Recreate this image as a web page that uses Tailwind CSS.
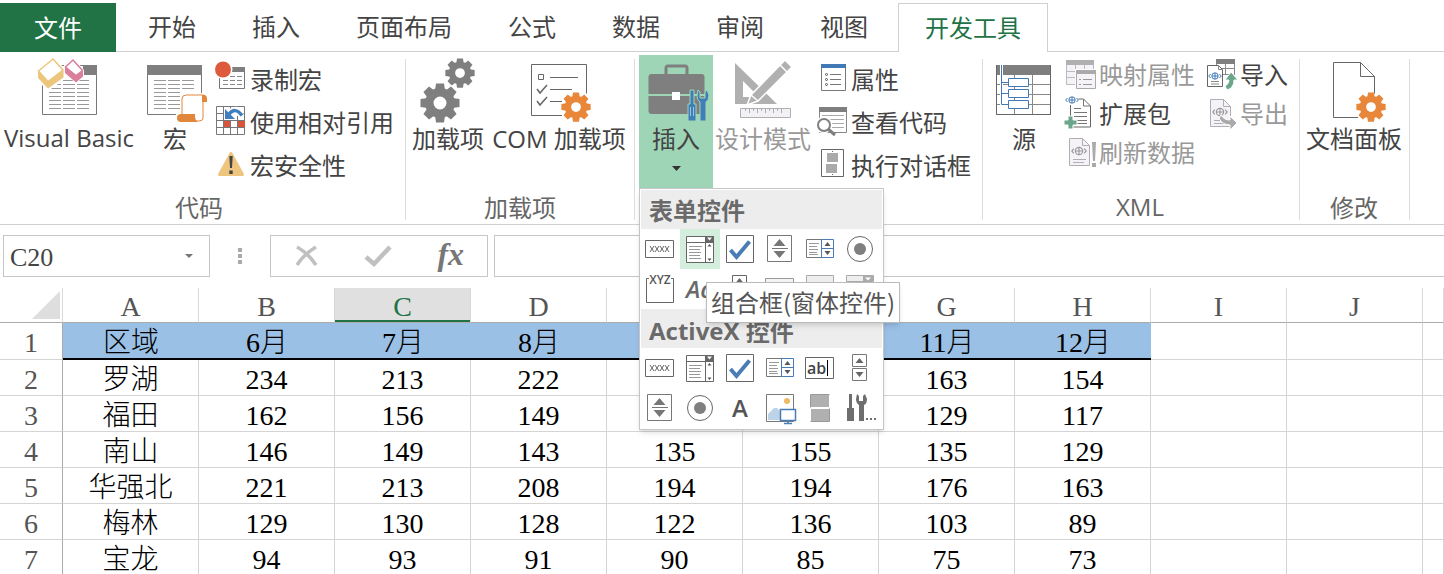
<!DOCTYPE html>
<html lang="zh-CN">
<head>
<meta charset="utf-8">
<title>工作表 - 开发工具</title>
<script src="https://cdn.jsdelivr.net/npm/@tailwindcss/browser@4"></script>
</head>
<body class="bg-white">
<svg class="hidden" aria-hidden="true">
  <defs>
    <symbol id="gear" viewBox="-20 -20 40 40">
      <circle r="10.7" fill="none" stroke="currentColor" stroke-width="8.4"/>
      <g fill="currentColor">
        <path id="tooth" d="M-4-19.5h8l1 7h-10zM-4 19.5h8l1-7h-10z"/>
        <use href="#tooth" transform="rotate(45)"/><use href="#tooth" transform="rotate(90)"/><use href="#tooth" transform="rotate(135)"/>
      </g>
    </symbol>
    <symbol id="globe" viewBox="0 0 14 8">
      <g fill="none" stroke="currentColor"><circle cx="7" cy="4" r="3.2"/><path d="M4 4h6M7 1v6M2.5 2L.7 4l1.8 2M11.5 2l1.8 2-1.8 2"/></g>
    </symbol>
    <symbol id="combo" viewBox="0 0 30 30">
      <path d="M1.500 2.500h27v26h-27z" fill="#fff" stroke="#666"/><path d="M1.500 8.500h27M20.500 8v20" stroke="#666"/><path d="M20 2h9v6h-9z" fill="#666"/><path d="M22 3.500h5l-2.500 3z" fill="#fff"/>
      <path d="M4 12.500h13M4 15.500h11M4 18.500h12M4 21.500h11M4 24.500h12" stroke="#999"/><path d="M22.500 12.500h4l-2-2.500zM22.500 24.500h4l-2 2.500z" fill="#555"/>
    </symbol>
    <symbol id="check" viewBox="0 0 30 30"><path d="M1.500 1.500h27v27h-27z" fill="#fff" stroke="#666"/><path d="M5.500 16l6 7L24.500 7.500" fill="none" stroke="#4a7db5" stroke-width="4"/></symbol>
    <symbol id="spin" viewBox="0 0 30 30"><path d="M2.500 1.500h24v26h-24z" fill="#fff" stroke="#777"/><path d="M7 14.500h16" stroke="#777"/><path d="M8.500 12h12l-6-7zM8.500 17h12l-6 7z" fill="#777"/></symbol>
    <symbol id="list" viewBox="0 0 30 30"><path d="M1.500 5.500h16v18h-16z" fill="#fff" stroke="#777"/><path d="M4 9.500h10M4 12.500h8M4 15.500h9M4 18.500h8M4 20.500h9" stroke="#999"/><path d="M16.500 5.500h12v18h-12zM16.500 14.500h12" fill="#fff" stroke="#4a7db5"/><path d="M19.500 12h6l-3-4zM19.500 17h6l-3 4z" fill="#555"/></symbol>
    <symbol id="radio" viewBox="0 0 30 30"><circle cx="15" cy="15" r="12.500" fill="#fff" stroke="#666"/><circle cx="15" cy="15" r="6" fill="#7f7f7f"/></symbol>
    <symbol id="push" viewBox="0 0 30 30"><path d="M.500 6.500h28v17h-28z" fill="#fff" stroke="#666"/><path d="M5 12l4 6m0-6l-4 6M10 12l4 6m0-6l-4 6M15 12l4 6m0-6l-4 6M20 12l4 6m0-6l-4 6" stroke="#666"/></symbol>
    <symbol id="sheetpage" viewBox="0 0 22 28"><path d="M.500.500h13l7 7v20h-20z" fill="#f6f3f8" stroke="#b0aeb2"/><path d="M13.500.500v7h7M4 21.500h13M4 24.500h11" fill="none" stroke="#b0aeb2"/></symbol>
  </defs>
</svg>

<div class="flex h-screen flex-col overflow-hidden text-2xl leading-6 text-[#444] font-['Noto_Sans_CJK_SC',sans-serif]">
  <nav class="flex shrink-0 pt-[3px] [&_button]:pb-0.5" aria-label="功能区选项卡">
    <button class="h-[49px] w-[116px] bg-[#217346] text-white">文件</button>
    <div class="w-1 border-b border-[#d0d0d0]"></div>
    <button class="border-b border-[#d0d0d0] px-7">开始</button>
    <button class="border-b border-[#d0d0d0] px-7">插入</button>
    <button class="border-b border-[#d0d0d0] px-7">页面布局</button>
    <button class="border-b border-[#d0d0d0] px-7">公式</button>
    <button class="border-b border-[#d0d0d0] px-7">数据</button>
    <button class="border-b border-[#d0d0d0] px-7">审阅</button>
    <button class="border-b border-[#d0d0d0] px-7">视图</button>
    <div class="w-0.5 border-b border-[#d0d0d0]"></div>
    <button class="w-[150px] border border-b-0 border-[#d0d0d0] text-[#217346]">开发工具</button>
    <div class="flex-1 border-b border-[#d0d0d0]"></div>
  </nav>

  <div class="flex h-[173px] shrink-0 whitespace-nowrap border-b border-[#d0d0d0] pt-[3px]">
    <section class="flex flex-col pl-1 pr-[11px]">
      <div class="flex flex-1 items-start">
        <button class="flex w-[130px] flex-col items-center gap-2 pt-[3px]">
          <svg class="h-[60px] w-16 overflow-visible" viewBox="0 0 64 60">
            <path d="M5.500 7.500h54v49h-54z" fill="#fff" stroke="#777"/><path d="M46 7h14v10H46z" fill="#7f7f7f"/>
            <path d="M12 22.500h12m2 0h12m2 0h12M12 26.500h12m2 0h12m2 0h12M12 30.500h12m2 0h12m2 0h12M12 34.500h12m2 0h12m2 0h12M12 38.500h12m2 0h12m2 0h12M12 42.500h12m2 0h12m2 0h12M12 46.500h12m2 0h12m2 0h12M12 50.500h12m2 0h12m2 0h12" stroke="#999"/>
            <path d="M0 11L16-2l12 13v10L11 33 0 22zM27 7l9-8 11 13v6l-8 8-11-12z" fill="#fff"/>
            <path d="M1 13l10 10.500L26.500 12v7.500L11 30.500 1 20z" fill="#ecc67c"/><path d="M16 1l10 11-15 11.500L1.500 13z" fill="#fff" stroke="#ecc67c" stroke-width="1.500"/>
            <path d="M28 8.500l11 9 7-5v6L39 24.500 28 15z" fill="#da7f9c"/><path d="M36 2l9.500 10.500-6.500 5L28.500 9z" fill="#fff" stroke="#da7f9c" stroke-width="1.500"/>
          </svg>
          <span class="font-['Open_Sans',sans-serif]">Visual Basic</span>
        </button>
        <button class="ml-[9px] flex w-16 flex-col items-center gap-2 pt-[3px]">
          <svg class="h-[60px] w-16 overflow-visible" viewBox="0 0 64 60">
            <path d="M4.500 7.500h54v49h-54z" fill="#fff" stroke="#777"/><path d="M4 7h55v10H4z" fill="#7f7f7f"/>
            <path d="M11 22.500h12m2 0h12m2 0h12M11 26.500h12m2 0h12m2 0h12M11 30.500h12m2 0h12m2 0h12M11 34.500h12m2 0h12M11 38.500h12m2 0h12M11 42.500h12m2 0h12M11 46.500h12m2 0h12M11 50.500h12m2 0h12" stroke="#999"/>
            <path d="M37 35h28v10h-5v20H33V55h4z" fill="#fff"/>
            <path d="M39 57V41q0-4 4-4h17q3 0 3 6h-3v17q0 3-4 3H38z" fill="#fff" stroke="#e1873b"/>
            <path d="M59 37h2q3 0 3 4v3h-5zM38 56h14v3q0 3 3 5H38q-4 0-4-4t4-4z" fill="#e1873b"/>
          </svg>
          <span>宏</span>
        </button>
        <div class="ml-2 flex flex-col pt-0.5">
          <button class="flex h-[43px] items-center gap-[5px]"><svg class="size-[30px] overflow-visible" viewBox="0 0 30 30"><path d="M4.500 3.500h25v21h-25z" fill="#fff" stroke="#777"/><path d="M17 3h13v5H17z" fill="#7f7f7f"/><path d="M8 12.500h5m2 0h5m2 0h5M8 16.500h5m2 0h5m2 0h5M8 20.500h5m2 0h5m2 0h5" stroke="#888"/><circle cx="8" cy="5.500" r="9.500" fill="#fff"/><circle cx="8" cy="5.500" r="8" fill="#dd5a3c"/></svg>录制宏</button>
          <button class="flex h-[43px] items-center gap-[5px]"><svg class="size-[30px] overflow-visible" viewBox="0 0 30 30"><path d="M1.500-.500h28v28h-28zM1.500 6.500h28M1.500 13.500h28M1.500 20.500h28M8.500-.500v28M15.500-.500v28M22.500-.500v28" fill="#fff" stroke="#777"/><path d="M9 14h6v6H9zM23 14h7v6h-7z" fill="#d8553c"/><path d="M9 1v12h12l-3-4q5-2 6 2h4q2-9-5-11-6-1-10 4z" fill="#fff"/><path d="M10 2v10h10z" fill="#3f7fbf"/><path d="M13.500 8Q20-1 27 8.500" fill="none" stroke="#3f7fbf" stroke-width="3.500"/></svg>使用相对引用</button>
          <button class="flex h-[43px] items-center gap-[5px]"><svg class="size-[30px] overflow-visible" viewBox="0 0 30 30"><path d="M16 3.500L27.500 24.500h-23z" fill="#eec57f" stroke="#eec57f" stroke-width="3" stroke-linejoin="round"/><path d="M14.300 6h3.400l-.700 12h-2zM14.300 20.500h3.400v3.500h-3.400z" fill="#444"/></svg>宏安全性</button>
        </div>
      </div>
      <h2 class="pb-[5px] text-center text-[#666]">代码</h2>
    </section>
    <div class="my-1 w-px bg-[#dcdcdc]"></div>

    <section class="flex flex-col px-1.5">
      <div class="flex flex-1 items-start gap-1.5">
        <button class="flex flex-col items-center gap-2 pt-[3px]">
          <svg class="h-[60px] w-16 overflow-visible text-[#7f7f7f]" viewBox="0 0 64 60"><use href="#gear" x="4" y="25" width="40" height="40"/><use href="#gear" x="29" y="0" width="30" height="30"/></svg>
          <span>加载项</span>
        </button>
        <button class="flex w-[138px] flex-col items-center gap-2 pt-[3px]">
          <svg class="h-[60px] w-16 overflow-visible" viewBox="0 0 64 60"><path d="M35 57.500H4.500v-51h55v29" fill="none" stroke="#666"/><path d="M11.500 16.500h5v5h-5zM23 19.500h28M23 31.500h22M23 43.500h12" fill="none" stroke="#666"/><path d="M10 31l3 4 7-8M10 43l3 4 7-8" fill="none" stroke="#666" stroke-width="1.500"/><g class="text-[#e8873a]"><use href="#gear" x="34" y="34" width="30" height="30"/></g></svg>
          <span><span class="font-['Open_Sans',sans-serif]">COM </span>加载项</span>
        </button>
      </div>
      <h2 class="pb-[5px] text-center text-[#666]">加载项</h2>
    </section>
    <div class="my-1 w-px bg-[#dcdcdc]"></div>

    <section class="flex flex-col pl-1 pr-[11px]">
      <div class="flex flex-1 items-start">
        <div class="relative">
          <button class="flex h-[133px] w-[74px] flex-col items-center gap-2 bg-[#9fd5b7] pt-[3px]" aria-expanded="true">
            <svg class="h-[60px] w-16 overflow-visible" viewBox="0 0 64 60">
              <path d="M22 16V10q0-2 2-2h17q2 0 2 2v6" fill="none" stroke="#7f7f7f" stroke-width="3"/><rect x="4.500" y="16" width="56" height="40" rx="3" fill="#7f7f7f"/><path d="M4 37h57" stroke="#9fd5b7" stroke-width="2"/><path d="M28 34h8v8h-8z" fill="#fff"/>
              <path d="M46 32h4v14h2v17h-8V46h2zM54 32l2 2v6h5v-6l2-2 2 5q0 5-3 7v19h-6V44q-3-2-3-6z" fill="#3f7fb8" stroke="#9fd5b7"/>
              <path d="M46.500 49v9M49.500 49v9" stroke="#9fc3dd"/>
            </svg>
            <span>插入</span>
            <svg class="mt-2 h-[5px] w-[9px]" viewBox="0 0 9 5"><path d="M0 0h9L4.500 5z" fill="#333"/></svg>
          </button>
          <div class="absolute left-0 top-full z-10 w-[245px] border border-[#c6c6c6] bg-white pt-px text-[#6a6a6a] shadow-md">
            <h3 class="mx-px flex h-[39px] items-center pl-2 font-bold bg-[#ededed]">表单控件</h3>
            <div class="grid w-60 grid-cols-[repeat(6,40px)] auto-rows-[40px] [&>button]:flex [&>button]:items-center [&>button]:justify-center [&_svg]:size-[30px]">
              <button aria-label="按钮"><svg><use href="#push"/></svg></button>
              <button aria-label="组合框" class="bg-[#d3eedd]"><svg><use href="#combo"/></svg></button>
              <button aria-label="复选框"><svg><use href="#check"/></svg></button>
              <button aria-label="数值调节钮"><svg><use href="#spin"/></svg></button>
              <button aria-label="列表框"><svg><use href="#list"/></svg></button>
              <button aria-label="选项按钮"><svg><use href="#radio"/></svg></button>
              <button aria-label="分组框"><svg viewBox="0 0 30 30" class="overflow-visible"><path d="M4 4.500H1.500v24h27v-24H26" fill="none" stroke="#666"/><text x="15" y="10" text-anchor="middle" font-size="12" fill="#555" class="font-['Open_Sans',sans-serif] font-semibold">XYZ</text></svg></button>
              <button aria-label="标签" class="font-['Open_Sans',sans-serif] font-semibold italic">Aa</button>
              <button aria-label="滚动条"><svg viewBox="0 0 30 30"><path d="M7.500 1.500h14v26h-14z" fill="none" stroke="#666"/><path d="M10.500 9h8l-4-5z" fill="#666"/></svg></button>
              <button aria-label="文本域"><svg viewBox="0 0 30 30"><path d="M.500 4.500h28v20H.500z" fill="#f4f4f4" stroke="#999"/></svg></button>
              <button aria-label="组合列表"><svg viewBox="0 0 30 30"><path d="M1.500 1.500h27v26h-27z" fill="#eee" stroke="#aaa"/></svg></button>
              <button aria-label="组合下拉"><svg viewBox="0 0 30 30"><path d="M1.500 1.500h27v6h-27z" fill="#eee" stroke="#aaa"/><path d="M18 2h10v6H18z" fill="#aaa"/><path d="M20 3.500h6l-3 3z" fill="#fff"/></svg></button>
            </div>
            <h3 class="mx-px flex h-[39px] items-center pl-2 pt-1 font-bold bg-[#ededed]"><span class="font-['Open_Sans',sans-serif]">ActiveX&nbsp;</span>控件</h3>
            <div class="grid w-60 grid-cols-[repeat(6,40px)] auto-rows-[40px] pb-px [&>button]:flex [&>button]:items-center [&>button]:justify-center [&_svg]:size-[30px]">
              <button aria-label="命令按钮"><svg><use href="#push"/></svg></button>
              <button aria-label="组合框"><svg><use href="#combo"/></svg></button>
              <button aria-label="复选框"><svg><use href="#check"/></svg></button>
              <button aria-label="列表框"><svg><use href="#list"/></svg></button>
              <button aria-label="文本框"><svg viewBox="0 0 30 30"><path d="M.500 4.500h28v21H.500z" fill="#fff" stroke="#666"/><path d="M22.500 7v16" stroke="#000"/><text x="2" y="21" font-size="16" fill="#444" class="font-['Open_Sans',sans-serif] font-semibold">ab</text></svg></button>
              <button aria-label="滚动条"><svg viewBox="0 0 30 30"><path d="M7.500 1.500h14v12h-14zM7.500 15.500h14v12h-14z" fill="#fff" stroke="#777"/><path d="M10.500 10h8l-4-5zM10.500 19h8l-4 5z" fill="#666"/></svg></button>
              <button aria-label="数值调节钮"><svg><use href="#spin"/></svg></button>
              <button aria-label="选项按钮"><svg><use href="#radio"/></svg></button>
              <button aria-label="标签" class="font-['Open_Sans',sans-serif] font-semibold text-[#555]">A</button>
              <button aria-label="图像"><svg viewBox="0 0 30 30" class="overflow-visible"><path d="M1.500 1.500h27v27h-27z" fill="#fff" stroke="#777"/><circle cx="22" cy="8" r="3" fill="#ecb968"/><path d="M3 27v-6l6-6h3l4 4v8z" fill="#bcd3e8"/><path d="M15.500 16.500h15v11h-15zM23 27v3M19 30.500h8" fill="#fff" stroke="#4a7db5" stroke-width="1.500"/></svg></button>
              <button aria-label="切换按钮"><svg viewBox="0 0 30 30"><path d="M6 2h18v12H6zM6 16h18v12H6z" fill="#b0b0b0"/><path d="M5.500 14.500V1.500h19M5.500 28.500h19v-13" fill="none" stroke="#999"/></svg></button>
              <button aria-label="其他控件"><svg viewBox="0 0 30 30" class="overflow-visible"><path d="M4 1h3v14h2v13H2V15h2zM12 1l2 2v5h4V3l2-2 2 5q0 5-3 6v16h-5V12q-3-2-3-6z" fill="#6e6e6e"/><path d="M21 25h2v2h-2zM25 25h2v2h-2zM29 25h2v2h-2z" fill="#6e6e6e"/></svg></button>
            </div>
            <div role="tooltip" class="absolute left-[66px] top-[93px] border border-[#bbb] bg-white px-1 pb-2 pt-[7px] font-normal text-[#555] shadow-md">组合框(窗体控件)</div>
          </div>
        </div>
        <button class="ml-0.5 flex flex-col items-center gap-2 pt-[3px] text-[#999]" disabled>
          <svg class="h-[60px] w-16 overflow-visible" viewBox="0 0 64 60"><path fill-rule="evenodd" d="M4 5l42 41H4zM12 23v16h16z" fill="#b0b0b0"/><path d="M9.500 50.500h50v9h-50z" fill="#f4f1f6" stroke="#b0b0b0"/><path d="M14.500 50v3m4-3v5m4-5v3m4-3v5m4-5v3m4-3v5m4-5v3m4-3v5m4-5v3m4-3v5" stroke="#b0b0b0"/><path d="M16 47l4-10L54 2l7 7-34 34z" fill="#b0b0b0" stroke="#fff" stroke-width="1.500"/><path d="M49 7l7 7M20 37l7 6" stroke="#fff" stroke-width="1.500"/></svg>
          <span>设计模式</span>
        </button>
        <div class="ml-[5px] flex flex-col pt-0.5">
          <button class="flex h-[43px] items-center gap-[5px]"><svg class="size-[30px] overflow-visible" viewBox="0 0 30 30"><path d="M5.500.500h24v26h-24z" fill="#fff" stroke="#777"/><path d="M5 0h25v4H5z" fill="#4079b5"/><path d="M14 10.500h11M14 15.500h11M14 20.500h11" stroke="#777"/><g fill="none" stroke="#555"><circle cx="10.500" cy="10.500" r="1"/><circle cx="10.500" cy="15.500" r="1"/><circle cx="10.500" cy="20.500" r="1"/></g></svg>属性</button>
          <button class="flex h-[43px] items-center gap-[5px]"><svg class="size-[30px] overflow-visible" viewBox="0 0 30 30"><path d="M3.500.500h27v25h-27z" fill="#fff" stroke="#888"/><path d="M3 0h28v5H3z" fill="#7f7f7f"/><path d="M6 8.500h22M14 12.500h14M16 16.500h12M16 20.500h12" stroke="#aaa"/><circle cx="8" cy="18" r="8.500" fill="#fff"/><circle cx="8" cy="18" r="6" fill="#fff" stroke="#7f7f7f" stroke-width="2"/><path d="M12 22l7 6" stroke="#7f7f7f" stroke-width="3"/></svg>查看代码</button>
          <button class="flex h-[43px] items-center gap-[5px]"><svg class="size-[30px] overflow-visible" viewBox="0 0 30 30"><path d="M5.500-.500h22v27h-22z" fill="#fff" stroke="#666"/><path d="M11 3h11v9H11zM10 14h11v9H10z" fill="#aaa"/><path d="M16 1h1v1h-1zM16 24h1v1h-1z" fill="#666"/></svg>执行对话框</button>
        </div>
      </div>
    </section>
    <div class="my-1 w-px bg-[#dcdcdc]"></div>

    <section class="flex flex-col pl-[9px] pr-[11px]">
      <div class="flex flex-1 items-start">
        <button class="flex flex-col items-center gap-2 pt-[3px]">
          <svg class="h-[60px] w-16 overflow-visible" viewBox="0 0 64 60"><path d="M4.500 7.500h54v49h-54zM4.500 26.500h54M4.500 36.500h54M4.500 46.500h54M22.500 17v39M40.500 17v39" fill="#fff" stroke="#888"/><path d="M4 7h55v10H4z" fill="#7f7f7f"/><path d="M4.500 7v49.500h54V7" fill="none" stroke="#666"/><path d="M9.500 7v40H16M9.500 24.500H16M9.500 35.500H16" fill="none" stroke="#fff" stroke-width="3"/><path d="M9.500 7v39.500H16M9.500 24.500H16M9.500 35.500H16" fill="none" stroke="#4079b5"/><path d="M16.500 20.500h20v8h-20zM16.500 31.500h20v8h-20zM16.500 42.500h20v8h-20z" fill="#fff" stroke="#4079b5"/></svg>
          <span>源</span>
        </button>
        <div class="-mt-px ml-2 flex flex-col">
          <button class="flex h-[39px] items-center gap-[5px] text-[#999]" disabled><svg class="size-[30px] overflow-visible" viewBox="0 0 30 30"><path d="M2.500 1.500h27v24h-27zM2.500 12.500h27M2.500 18.500h27M11.500 6v19M20.500 6v19" fill="#f6f3f8" stroke="#bbb"/><path d="M2 1h28v5H2z" fill="#b0b0b0"/><path d="M11 10h22v21H11z" fill="#fff"/><path d="M12.500 11.500h19v18h-19z" fill="#f6f3f8" stroke="#aaa"/><path d="M12 11h20v4H12z" fill="#aaa"/><path d="M15 20.500h2m2 0h9M15 25.500h2m2 0h9" stroke="#999"/></svg>映射属性</button>
          <button class="flex h-[39px] items-center gap-[5px]"><svg class="size-[30px] overflow-visible text-[#4079b5]" viewBox="0 0 30 30"><path d="M6.500 7v22h20V8l-7-7h-5" fill="#fff" stroke="#666"/><path d="M19.500 1v7h7M10 10.500h7M10 14.500h13M10 18.500h13M12 22.500h11M12 25.500h11" fill="none" stroke="#777"/><use href="#globe" x="1" y="-2" width="14" height="8"/><path d="M4 18h5v4h4v5H9v4H4v-4H0v-5h4z" fill="#6ba58a" stroke="#fff"/></svg>扩展包</button>
          <button class="flex h-[39px] items-center gap-[5px] text-[#999]" disabled><svg class="size-[30px] overflow-visible" viewBox="0 0 30 30"><use href="#sheetpage" x="5" y="1" width="22" height="28"/><use href="#globe" x="7" y="9" width="16" height="10"/><path d="M28 5h4l-1 19h-2zM28 26h4v4h-4z" fill="#aaa"/></svg>刷新数据</button>
        </div>
        <div class="-mt-px ml-2.5 flex flex-col">
          <button class="flex h-[39px] items-center gap-[5px]"><svg class="size-[30px] overflow-visible text-[#4079b5]" viewBox="0 0 30 30"><path d="M11.500.500h18v15h-18zM11.500 9.500h18M20.500 5v10" fill="#fff" stroke="#888"/><path d="M11 0h19v5H11z" fill="#7f7f7f"/><path d="M2.500 6.500h11l4 4v17h-15z" fill="#fff" stroke="#666"/><path d="M13.500 6.500v4h4M6 22.500h8M6 25h8" fill="none" stroke="#888"/><use href="#globe" x="3" y="13" width="14" height="8"/><path d="M26 13l7 8h-4q0 8-7 10l-2-4q4-2 4-6h-4z" fill="#6ba58a" stroke="#fff"/></svg>导入</button>
          <button class="flex h-[39px] items-center gap-[5px] text-[#999]" disabled><svg class="size-[30px] overflow-visible" viewBox="0 0 30 30"><use href="#sheetpage" x="5" y="1" width="22" height="28"/><use href="#globe" x="7" y="9" width="16" height="10"/><path d="M16 17q3 5 9 5v-4l7 7-7 7v-5q-8 0-11-7z" fill="#aaa" stroke="#fff"/></svg>导出</button>
        </div>
      </div>
      <h2 class="pb-[5px] text-center text-[#666] font-['Open_Sans',sans-serif]">XML</h2>
    </section>
    <div class="my-1 w-px bg-[#dcdcdc]"></div>

    <section class="flex flex-col pl-1.5 pr-[7px]">
      <div class="flex flex-1 items-start">
        <button class="flex flex-col items-center gap-2 pt-[3px]">
          <svg class="h-[60px] w-16 overflow-visible" viewBox="0 0 64 60"><path d="M36 59.500H11.500v-55h27l14 14v17M38.500 4.500v14h14" fill="none" stroke="#666"/><g class="text-[#e8873a]"><use href="#gear" x="34" y="34" width="30" height="30"/></g></svg>
          <span>文档面板</span>
        </button>
      </div>
      <h2 class="pb-[5px] text-center text-[#666]">修改</h2>
    </section>
    <div class="my-1 w-px bg-[#dcdcdc]"></div>
  </div>

  <div class="flex h-[63px] shrink-0 pl-[3px] pt-2.5">
    <div class="flex h-[42px] w-[207px] items-center border border-[#c6c6c6]">
      <input aria-label="名称框" value="C20" class="min-w-0 flex-1 pl-1.5 pt-1 text-[26px] outline-none font-['Liberation_Serif',serif]">
      <button aria-label="展开名称框" class="w-8 pl-2"><svg class="h-1 w-2" viewBox="0 0 8 4"><path d="M0 0h8L4 4z" fill="#777"/></svg></button>
    </div>
    <div class="flex h-[42px] w-[60px] flex-col items-center justify-center gap-0.5"><i class="size-1 bg-[#aaa]"></i><i class="size-1 bg-[#aaa]"></i><i class="size-1 bg-[#aaa]"></i></div>
    <div class="flex h-[42px] w-[218px] items-center justify-around border border-[#c6c6c6]">
      <button aria-label="取消"><svg class="size-6" viewBox="0 0 24 24"><path d="M3 3Q14 9 22 21M22 3Q10 10 3 21" fill="none" stroke="#c0c0c0" stroke-width="3.500"/></svg></button>
      <button aria-label="输入"><svg class="h-6 w-7" viewBox="0 0 28 24"><path d="M2 13l8 7L26 3" fill="none" stroke="#c0c0c0" stroke-width="4.500"/></svg></button>
      <button aria-label="插入函数" class="pb-1 text-[32px] font-bold italic text-[#777] font-['Liberation_Serif',serif]">fx</button>
    </div>
    <input aria-label="编辑栏" class="ml-1.5 h-[42px] min-w-0 flex-1 border border-r-0 border-[#c6c6c6] px-2 outline-none">
  </div>

  <table class="w-full table-fixed border-separate border-spacing-0 text-center text-[28px] leading-7 text-black font-['Liberation_Serif','Noto_Sans_CJK_SC',serif] [&_td]:border-b [&_td]:border-r [&_td]:border-[#d4d4d4] [&_td]:pt-1 [&_td]:font-light [&_th]:font-normal [&_tbody_th]:border-b [&_tbody_th]:border-r [&_tbody_th]:border-b-[#d4d4d4] [&_tbody_th]:border-r-[#ababab] [&_tbody_th]:pt-1 [&_tbody_th]:text-[#555] [&_tbody_tr]:h-9">
    <colgroup><col class="w-[63px]"><col class="w-[136px]"><col class="w-[136px]"><col class="w-[136px]"><col class="w-[136px]"><col class="w-[136px]"><col class="w-[136px]"><col class="w-[136px]"><col class="w-[136px]"><col class="w-[136px]"><col class="w-[136px]"><col></colgroup>
    <thead class="text-[#555] [&_th]:border-b [&_th]:border-r [&_th]:border-b-[#ababab] [&_th]:border-r-[#d9d9d9] [&_th]:pt-1">
      <tr class="h-[35px]"><th aria-label="全选"><svg class="-mt-1 ml-8 h-7 w-7" viewBox="0 0 28 28"><path d="M28 0v28H0z" fill="#dedede"/></svg></th><th>A</th><th>B</th><th class="bg-[#e0e0e0] text-[#217346] shadow-[inset_0_-2px_0_#217346]">C</th><th>D</th><th></th><th></th><th>G</th><th>H</th><th>I</th><th>J</th><th></th></tr>
    </thead>
    <tbody class="[&_tr:first-child]:h-[37px] [&_.hd]:border-b-2 [&_.hd]:border-r-0 [&_.hd]:border-black [&_.hd]:bg-[#9bc0e6]">
      <tr><th>1</th><td class="hd">区域</td><td class="hd">6月</td><td class="hd">7月</td><td class="hd">8月</td><td class="hd"></td><td class="hd"></td><td class="hd">11月</td><td class="hd">12月</td><td></td><td></td><td></td></tr>
      <tr><th>2</th><td>罗湖</td><td>234</td><td>213</td><td>222</td><td></td><td></td><td>163</td><td>154</td><td></td><td></td><td></td></tr>
      <tr><th>3</th><td>福田</td><td>162</td><td>156</td><td>149</td><td></td><td></td><td>129</td><td>117</td><td></td><td></td><td></td></tr>
      <tr><th>4</th><td>南山</td><td>146</td><td>149</td><td>143</td><td>135</td><td>155</td><td>135</td><td>129</td><td></td><td></td><td></td></tr>
      <tr><th>5</th><td>华强北</td><td>221</td><td>213</td><td>208</td><td>194</td><td>194</td><td>176</td><td>163</td><td></td><td></td><td></td></tr>
      <tr><th>6</th><td>梅林</td><td>129</td><td>130</td><td>128</td><td>122</td><td>136</td><td>103</td><td>89</td><td></td><td></td><td></td></tr>
      <tr><th>7</th><td>宝龙</td><td>94</td><td>93</td><td>91</td><td>90</td><td>85</td><td>75</td><td>73</td><td></td><td></td><td></td></tr>
    </tbody>
  </table>
</div>
</body>
</html>
